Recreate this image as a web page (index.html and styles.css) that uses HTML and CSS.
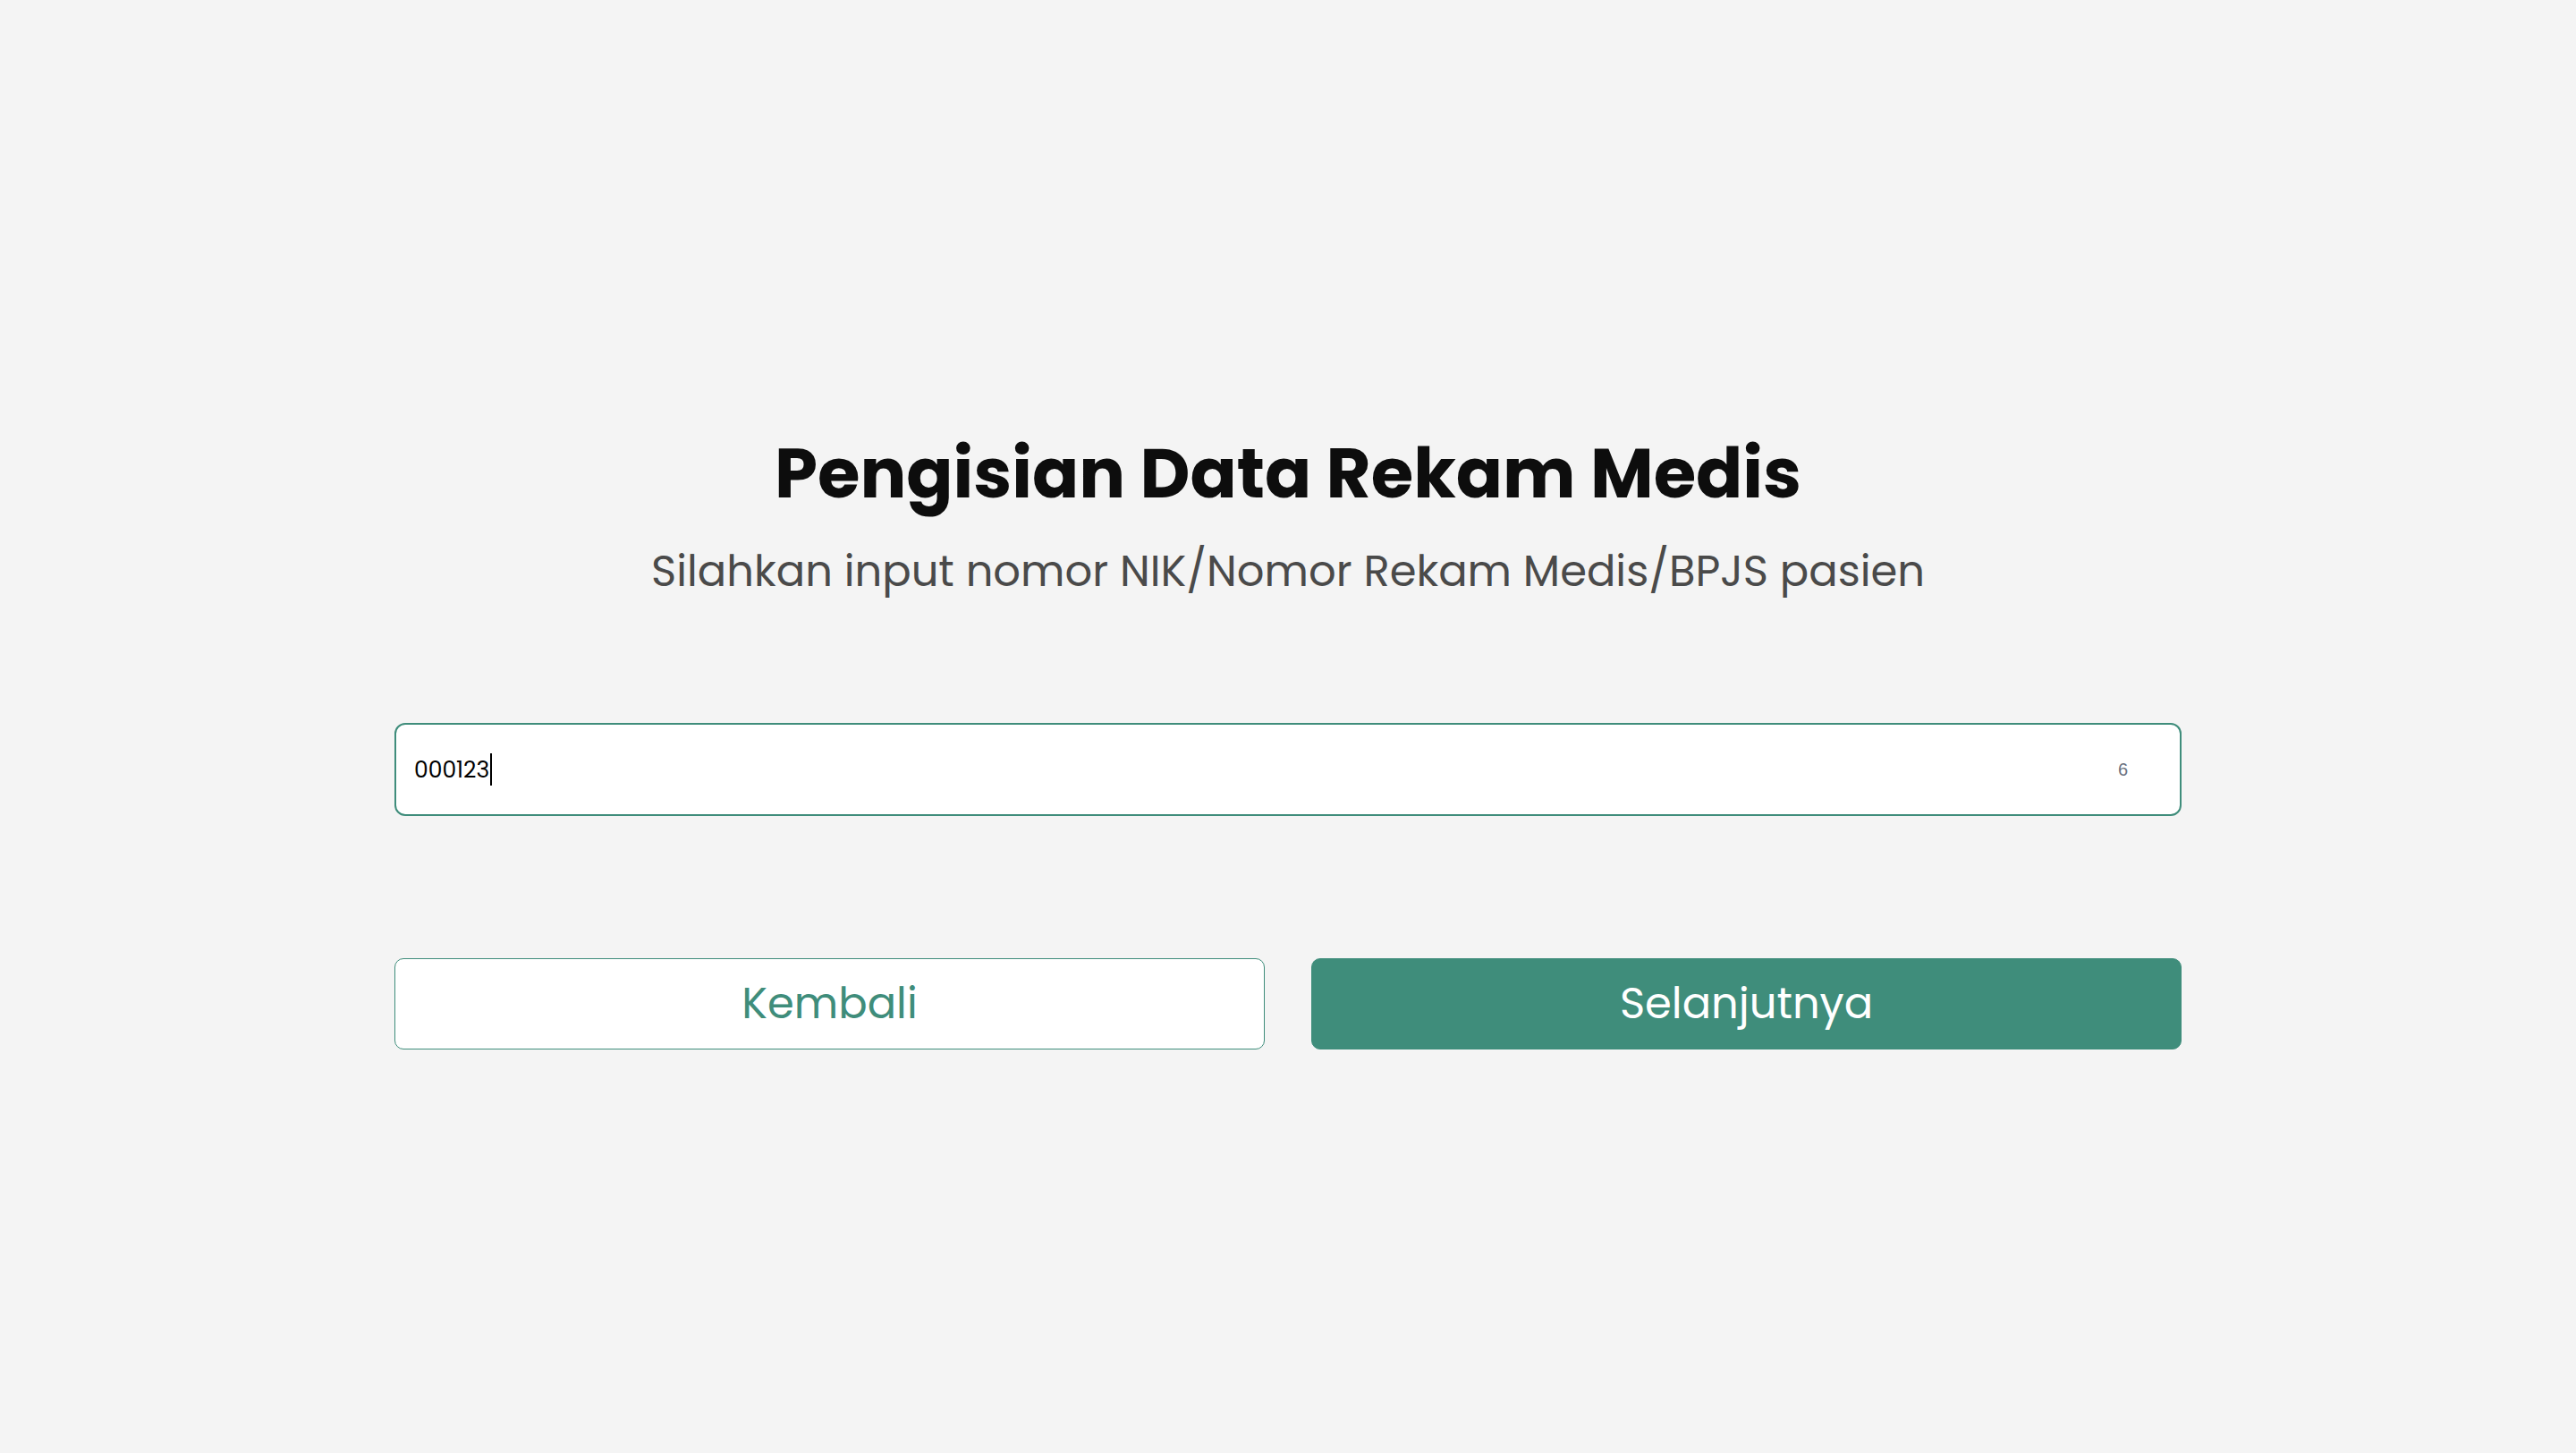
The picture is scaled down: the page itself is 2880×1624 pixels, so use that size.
FILE: index.html
```html
<!DOCTYPE html>
<html lang="id">
<head>
<meta charset="utf-8">
<title>Pengisian Data Rekam Medis</title>
<link rel="stylesheet" href="styles.css">
</head>
<body>
<main class="page">
  <header class="intro">
    <h1 class="title">Pengisian Data Rekam Medis</h1>
    <p class="subtitle">Silahkan input nomor NIK/Nomor Rekam Medis/BPJS pasien</p>
  </header>
  <form class="form">
    <div class="field" role="textbox" aria-label="Nomor NIK/Nomor Rekam Medis/BPJS">
      <span class="field-value">000123</span><span class="caret"></span>
      <span class="counter">6</span>
    </div>
    <div class="actions">
      <button type="button" class="btn btn-outline">Kembali</button>
      <button type="button" class="btn btn-solid">Selanjutnya</button>
    </div>
  </form>
</main>
</body>
</html>
```
FILE: styles.css
```css
html, body {
  margin: 0;
  padding: 0;
}
body {
  background: #f4f4f4;
  font-family: "Poppins", "Open Sans", "Liberation Sans", sans-serif;
  color: #111;
}
.page {
  min-height: 1624px;
  box-sizing: border-box;
  display: flex;
  flex-direction: column;
  align-items: center;
  padding-top: 469px;
}
.intro {
  display: flex;
  flex-direction: column;
  align-items: center;
}
.title {
  margin: 0;
  font-size: 77px;
  line-height: 120px;
  font-weight: 700;
  color: #0d0d0d;
}
.subtitle {
  margin: 10px 0 0;
  font-size: 48px;
  line-height: 80px;
  color: #4a4a4a;
}
.form {
  width: 1998px;
  margin-top: 129px;
}
.field {
  height: 104px;
  box-sizing: border-box;
  border: 2px solid #3f8d7b;
  border-radius: 12px;
  background: #fff;
  display: flex;
  align-items: center;
  padding: 0 58px 0 20px;
  font-size: 25px;
  color: #000;
}
.field-value {
  line-height: 1;
}
.caret {
  width: 2px;
  height: 36px;
  background: #000;
  margin-left: 1px;
}
.counter {
  margin-left: auto;
  font-family: "Liberation Sans", sans-serif;
  font-size: 20px;
  color: #6b7280;
}
.actions {
  display: grid;
  grid-template-columns: 1fr 1fr;
  gap: 52px;
  margin-top: 159px;
}
.btn {
  height: 102px;
  border-radius: 10px;
  font-family: "Poppins", "Open Sans", "Liberation Sans", sans-serif;
  font-size: 48px;
  cursor: pointer;
}
.btn-outline {
  background: #fff;
  border: 1px solid #3f8d7b;
  color: #3f8d7b;
}
.btn-solid {
  background: #3f8d7b;
  border: 1px solid #3f8d7b;
  color: #fff;
}
```
